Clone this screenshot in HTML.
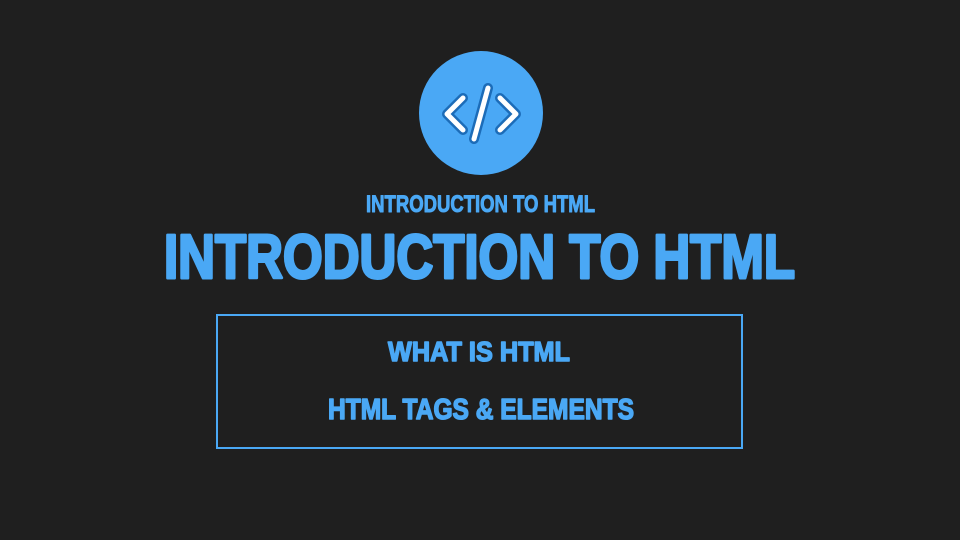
<!DOCTYPE html>
<html><head><meta charset="utf-8"><style>
html,body{margin:0;padding:0;background:#1f1f1f;width:960px;height:540px;overflow:hidden}
</style></head><body>
<svg width="960" height="540" viewBox="0 0 960 540" xmlns="http://www.w3.org/2000/svg">
<rect width="960" height="540" fill="#1f1f1f"/>
<circle cx="481" cy="113" r="62" fill="#4aa8f5"/>
<g fill="none" stroke-linecap="round" stroke-linejoin="round">
<g stroke="#1c6cb8" stroke-width="10">
<path d="M463 98 L447 114 L463 130"/>
<path d="M500 98 L516 114 L500 130"/>
<path d="M488 88 L474 139"/>
</g>
<g stroke="#ffffff" stroke-width="5">
<path d="M463 98 L447 114 L463 130"/>
<path d="M500 98 L516 114 L500 130"/>
<path d="M488 88 L474 139"/>
</g>
</g>
<g fill="#4aa8f5" stroke="#4aa8f5" stroke-linejoin="round" font-family="Liberation Sans, sans-serif" font-weight="bold">
<text x="366" y="212" font-size="24" stroke-width="1" textLength="229" lengthAdjust="spacingAndGlyphs">INTRODUCTION TO HTML</text>
<text x="164" y="278" font-size="62" stroke-width="3" textLength="631" lengthAdjust="spacingAndGlyphs">INTRODUCTION TO HTML</text>
<text x="388" y="361" font-size="28" stroke-width="1.5" textLength="182" lengthAdjust="spacingAndGlyphs">WHAT IS HTML</text>
<text x="328" y="419" font-size="29" stroke-width="1.5" textLength="306" lengthAdjust="spacingAndGlyphs">HTML TAGS &amp; ELEMENTS</text>
</g>
<rect x="217" y="315" width="525" height="133" fill="none" stroke="#4aa8f5" stroke-width="2"/>
</svg>
</body></html>
